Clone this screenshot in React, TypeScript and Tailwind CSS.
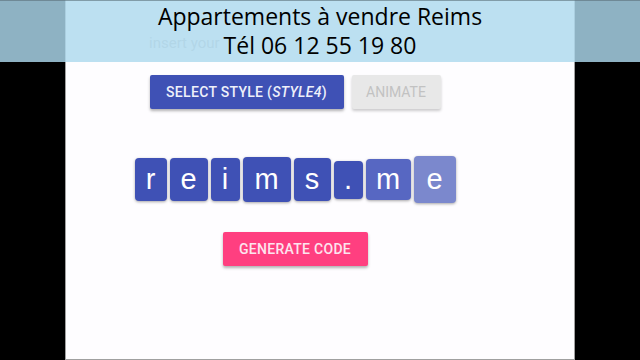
const tiles = [
  { ch: 'r', w: 32, h: 43, bg: 'bg-[#3f51b5]' },
  { ch: 'e', w: 38, h: 43, bg: 'bg-[#3f51b5]' },
  { ch: 'i', w: 29, h: 43, bg: 'bg-[#3f51b5]' },
  { ch: 'm', w: 48, h: 45, bg: 'bg-[#3f51b5]' },
  { ch: 's', w: 37, h: 43, bg: 'bg-[#3f51b5]' },
  { ch: '.', w: 29, h: 38, bg: 'bg-[#3f51b5]' },
  { ch: 'm', w: 45, h: 41, bg: 'bg-[#5767c2]' },
  { ch: 'e', w: 42, h: 47, bg: 'bg-[#7b88cd]' },
];

export default function App() {
  return (
    <div className="relative h-[360px] w-[640px] overflow-hidden bg-black">
      {/* page panel */}
      <div className="mx-auto flex h-full w-[510px] flex-col items-center border-x border-b border-[#a0a0a0] bg-[#fefdff] pr-[50px] font-['Roboto',sans-serif]">
        <div className="mt-[32px] h-[23px] w-[292px] text-[15px] leading-[23px] text-[#c6c6c6]">
          insert your
        </div>

        <div className="mt-[20px] flex gap-[8px]">
          <button className="flex h-[34px] w-[194px] items-center justify-center rounded-[2px] bg-[#3f51b5] text-[14px] font-medium tracking-[0.3px] text-[#eef0fa] shadow-[0_2px_3px_rgba(0,0,0,0.3)]">
            SELECT STYLE (<i>STYLE4</i>)
          </button>
          <button className="flex h-[34px] w-[89px] items-center justify-center rounded-[2px] bg-[#e8e8e8] text-[14px] font-normal text-[#c2c2c2] shadow-[0_2px_3px_rgba(0,0,0,0.2)]">
            ANIMATE
          </button>
        </div>

        <div className="mt-[47px] flex h-[47px] items-center gap-[3px]">
          {tiles.map((t, i) => (
            <div
              key={i}
              className={`flex items-center justify-center rounded-[4px] ${t.bg} font-['Liberation_Sans',sans-serif] text-[29px] text-white shadow-[0_1px_3px_rgba(0,0,0,0.35)]`}
              style={{ width: t.w, height: t.h }}
            >
              {t.ch}
            </div>
          ))}
        </div>

        <button className="mt-[29px] flex h-[34px] w-[145px] items-center justify-center rounded-[2px] bg-[#ff3f80] text-[14px] font-medium tracking-[0.3px] text-[#fde4ee] shadow-[0_2px_3px_rgba(0,0,0,0.3)]">
          GENERATE CODE
        </button>
      </div>

      {/* caption overlay */}
      <div className="absolute left-0 right-0 top-0 flex h-[62px] flex-col items-center border-t border-[rgba(90,110,120,0.6)] bg-[rgba(173,217,238,0.82)] pt-[1px] font-['Open_Sans',sans-serif] text-[23px] leading-[29px] text-black">
        <div>Appartements à vendre Reims</div>
        <div>Tél 06 12 55 19 80</div>
      </div>
    </div>
  );
}
